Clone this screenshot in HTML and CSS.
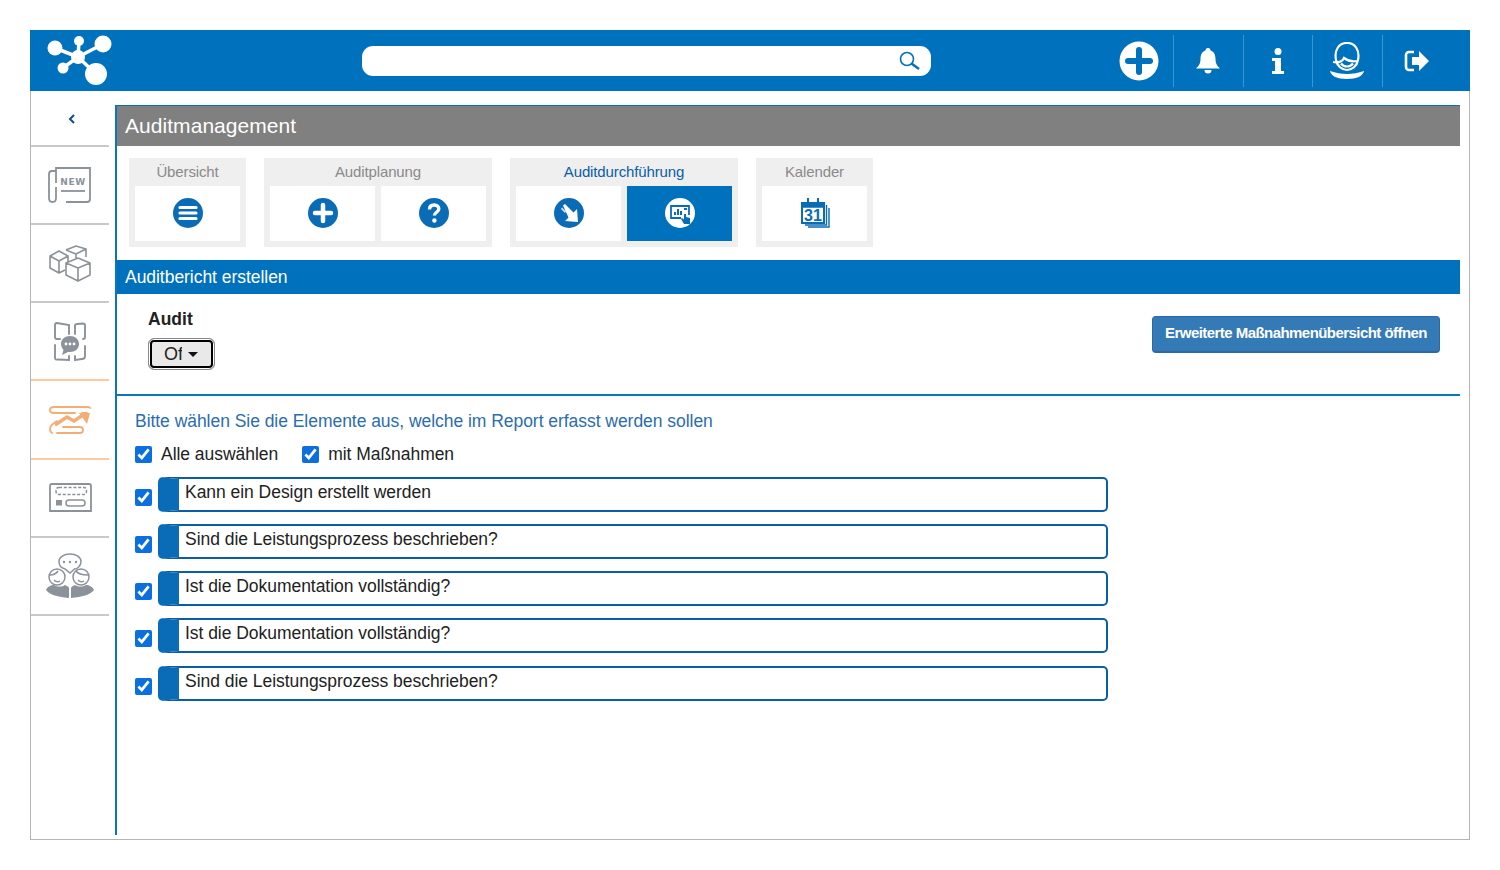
FILE: index.html
```html
<!DOCTYPE html>
<html lang="de">
<head>
<meta charset="utf-8">
<title>Auditmanagement</title>
<link rel="stylesheet" href="styles.css">
</head>
<body>
<div class="frame">
  <header class="topbar">
    <div class="logo">
      <svg width="66" height="52" viewBox="0 0 66 52"><path d="M31 22 8 13M31 22 32 6M31 22 56 9M31 22 16 33M31 22 49 39" stroke="#fff" stroke-width="3.500"/><g fill="#fff"><circle cx="31" cy="22" r="7"/><circle cx="8" cy="13" r="7.500"/><circle cx="32" cy="6" r="5"/><circle cx="56" cy="9" r="8.500"/><circle cx="16" cy="33" r="5.500"/><circle cx="49" cy="39" r="11"/></g></svg>
    </div>
    <div class="search">
      <svg width="24" height="20" viewBox="0 0 24 20" fill="none" stroke="#0071bc" stroke-width="1.600"><circle cx="9" cy="8" r="6.500"/><path d="M13.500 12.500 21 18" stroke-width="2.400"/></svg>
    </div>
    <nav class="topicons">
      <div class="topicon"><svg width="40" height="40" viewBox="0 0 40 40"><circle cx="20" cy="20" r="19.500" fill="#fff"/><path d="M20 9v22M9 20h22" stroke="#0071bc" stroke-width="6" stroke-linecap="round"/></svg></div>
      <div class="topicon"><svg width="26" height="28" viewBox="0 0 26 28" fill="#fff"><path d="M13 1c2 0 2.500 1.500 2.500 2.500C19 4.500 20.500 8 20.500 12c0 5 2 7 4.500 9.500H1C3.500 19 5.500 17 5.500 12 5.500 8 7 4.500 10.500 3.500 10.500 2.500 11 1 13 1Z"/><path d="M9.500 23h7a3.500 3.500 0 0 1-7 0Z"/></svg></div>
      <div class="topicon"><svg width="14" height="26" viewBox="0 0 14 26" fill="#fff"><circle cx="7" cy="3.500" r="3.500"/><path d="M1 10h9v13h3v3H1v-3h3V13H1Z"/></svg></div>
      <div class="topicon"><svg width="36" height="38" viewBox="0 0 36 38" fill="none" stroke="#fff" stroke-width="2.200"><path d="M7 18C5 8 10 1 18 1s13 7 11 17c-1 6-6 10-11 10S8 24 7 18Z"/><path d="M4 20c5 1 9 0 11-4 4 3 8 4 13 3"/><path d="M12 21.500c3 4 9 4 12 0"/><path d="M1 29c6 2 11 3 17 3s11-1 17-3c-1 5-7 8-17 8S2 34 1 29Z" fill="#fff" stroke="none"/></svg></div>
      <div class="topicon"><svg width="26" height="22" viewBox="0 0 26 22"><path d="M10 2H5a3 3 0 0 0-3 3v12a3 3 0 0 0 3 3h5" fill="none" stroke="#fff" stroke-width="2.600"/><path d="M8 7h7V1l10 10-10 10v-6H8Z" fill="#fff"/></svg></div>
    </nav>
  </header>
  <div class="body">
    <aside class="sidebar">
      <div class="back"><svg width="8" height="10" viewBox="0 0 8 10" fill="none" stroke="#0a4f8f" stroke-width="2"><path d="M6 1 2 5l4 4"/></svg></div>
      <div class="sideitem"><svg width="44" height="36" viewBox="0 0 44 36" fill="none" stroke="#8b929a" stroke-width="1.800"><path d="M8 16V1h34v31q0 3-3 3H18"/><path d="M8 4H4Q1 4 1 7v24q0 4 3.500 4T8 31V20"/><path d="M13 24h24" stroke-width="1.800"/><text x="25" y="18" class="newtext">NEW</text></svg></div>
      <div class="sideitem"><svg width="42" height="37" viewBox="0 0 42 37" fill="none" stroke="#8b929a" stroke-width="1.600" stroke-linejoin="round"><path d="M1 11 10 6l9 5-9 5ZM1 11v12l9 5 6-3M10 16v12M19 11v6"/><path d="M17 5 27 1l10 3v8M17 5l10 4 10-5M27 9v4"/><path d="M17 18l12-5 12 5-12 5ZM17 18v12l12 6 12-6V18M29 23v13"/></svg></div>
      <div class="sideitem"><svg width="32" height="39" viewBox="0 0 32 39" fill="none" stroke="#8b929a" stroke-width="1.900" stroke-linecap="round"><path d="M15 12V3L3 1Q1 1 1 3v12q0 2 2 2h3"/><path d="M21 12V4q0-2 2-2l6-.5q2 0 2 2V15q0 2-2 2"/><path d="M1 23v13q0 2 3 1.500L15 38v-4"/><path d="M31 24v10q0 3-3 3l-7 1v-4"/><path d="M16 14c5 0 9 3 9 8s-4 8-9 8h-2l-6 3 1.500-5C8 26 7 24 7 22c0-5 4-8 9-8Z" fill="#8b929a" stroke="none"/><g fill="#fff" stroke="none"><circle cx="12" cy="22" r="1.400"/><circle cx="16" cy="22" r="1.400"/><circle cx="20" cy="22" r="1.400"/></g></svg></div>
      <div class="sideitem active"><svg width="43" height="28" viewBox="0 0 43 28" fill="none" stroke="#f5ad76" stroke-width="1.900" stroke-linecap="round"><path d="M41 2Q41 1 39 1H5Q1 1 1 4t4 3h21M33 7h5"/><path d="M14 21h17q3 0 3 3t-3 3H8"/><path d="M8 15Q1 19 1 23q0 3 2 4"/><path d="M6 19l12-8 7 4 9-6" stroke-width="3.400" stroke-linecap="butt"/><path d="M30 7l11 0-3 11Z" fill="#f5ad76" stroke="none"/></svg></div>
      <div class="sideitem"><svg width="43" height="30" viewBox="0 0 43 30" fill="none" stroke="#8b929a" stroke-width="1.800"><path d="M1 28V3q0-2 2-2h37q2 0 2 2v25H1Z"/><path d="M10 4.500h25q2.500 0 2.500 3.500t-2.500 3.500H10Q7 11.500 7 8t3-3.500Z" stroke-dasharray="3 1.800" stroke-width="1.500"/><rect x="17" y="17" width="19" height="6" rx="3" stroke-width="1.500"/><rect x="7" y="17" width="6" height="5.500" fill="#8b929a" stroke="none"/></svg></div>
      <div class="sideitem"><svg width="48" height="46" viewBox="0 0 48 46" fill="none" stroke="#8b929a" stroke-width="1.500"><path d="M19 16c-4-1-6-4-6-7.500C13 4 18 1 24 1s11 3 11 7.500S31 16 28.500 16L24 20Z"/><circle cx="18" cy="9" r="1.200" fill="#8b929a" stroke="none"/><circle cx="24" cy="9" r="1.200" fill="#8b929a" stroke="none"/><circle cx="30" cy="9" r="1.200" fill="#8b929a" stroke="none"/><circle cx="11" cy="24" r="8"/><circle cx="35" cy="24" r="8"/><path d="M4 22c4 0 6-1 8-4M30 18c2 3 5 4 12 4M8 27q3 3 6 1M32 27q3 3 6 1"/><path d="M0 37c1-3 5-5 8-5 3 2 8 2 11 0 2 1 4 2 4 3v10C12 44 4 42 0 37ZM48 37c-1-3-5-5-8-5-3 2-8 2-11 0-2 1-4 2-4 3v10c11-1 19-3 23-8Z" fill="#8b929a" stroke="none"/></svg></div>
    </aside>
    <main class="main">
      <h1 class="title">Auditmanagement</h1>
      <div class="tabs">
        <section class="tabgroup">
          <div class="tabtitle">Übersicht</div>
          <div class="cells"><div class="cell"><svg class="ic" viewBox="0 0 30 30"><circle cx="15" cy="15" r="15" fill="#0a6cb6"/><path d="M7 9.500h16M7 15h16M7 20.500h16" stroke="#fff" stroke-width="3.200" stroke-linecap="round"/></svg></div></div>
        </section>
        <section class="tabgroup">
          <div class="tabtitle">Auditplanung</div>
          <div class="cells">
            <div class="cell"><svg class="ic" viewBox="0 0 30 30"><circle cx="15" cy="15" r="15" fill="#0a6cb6"/><path d="M15 7v16M7 15h16" stroke="#fff" stroke-width="4.500" stroke-linecap="round"/></svg></div>
            <div class="cell"><svg class="ic" viewBox="0 0 30 30"><circle cx="15" cy="15" r="15" fill="#0a6cb6"/><path d="M10.500 11.500c0-3 2-4.500 4.700-4.500 2.800 0 4.600 1.600 4.600 3.900 0 3.300-4.400 3.400-4.400 6.600" fill="none" stroke="#fff" stroke-width="3.400"/><circle cx="15.400" cy="22.500" r="2.200" fill="#fff"/></svg></div>
          </div>
        </section>
        <section class="tabgroup current">
          <div class="tabtitle">Auditdurchführung</div>
          <div class="cells">
            <div class="cell"><svg class="ic" viewBox="0 0 30 30"><circle cx="15" cy="15" r="15" fill="#0a6cb6"/><path d="M11 15 7 11l1-1.500 4 4Z" fill="#cfe3f2"/><path d="M9 7.500 11 6l8.500 8.500L23 11l1 13-13-1 3.500-3.500Z" fill="#fff"/></svg></div>
            <div class="cell selected"><svg class="ic" viewBox="0 0 30 30"><circle cx="15" cy="15" r="15" fill="#fff"/><path d="M16 20H6V8h18v9" fill="none" stroke="#0a6cb6" stroke-width="1.800"/><path d="M10 17v-3M13 17v-6M16 17v-4M19 11h3" stroke="#0a6cb6" stroke-width="2"/><path d="M19 26l-3-5 1-1 2 1.500V16h2v3l4 1v6Z" fill="#0a6cb6"/></svg></div>
          </div>
        </section>
        <section class="tabgroup">
          <div class="tabtitle">Kalender</div>
          <div class="cells"><div class="cell"><svg class="cal" viewBox="0 0 30 30" fill="none" stroke="#0a6cb6" stroke-width="2"><path d="M2 5h22v20H2Z"/><path d="M2 5h22v4H2Z" fill="#0a6cb6" stroke-width="1.500"/><path d="M8 0v6M18 0v6" stroke-width="2"/><path d="M26.500 7v20H5M29 10v19H8" stroke-width="1.400"/><text x="13" y="23" class="caltext">31</text></svg></div></div>
        </section>
      </div>
      <h2 class="sectionbar">Auditbericht erstellen</h2>
      <div class="filter">
        <div class="auditfield">
          <label class="auditlabel">Audit</label>
          <button class="dropdown"><span class="ddtext">Of</span><span class="caret"></span></button>
        </div>
        <button class="primary">Erweiterte Maßnahmenübersicht öffnen</button>
      </div>
      <div class="report">
        <p class="hint">Bitte wählen Sie die Elemente aus, welche im Report erfasst werden sollen</p>
        <div class="allrow">
          <label class="check"><input type="checkbox" checked>Alle auswählen</label>
          <label class="check"><input type="checkbox" checked>mit Maßnahmen</label>
        </div>
        <div class="item"><input type="checkbox" checked><div class="itembox">Kann ein Design erstellt werden</div></div>
        <div class="item"><input type="checkbox" checked><div class="itembox">Sind die Leistungsprozess beschrieben?</div></div>
        <div class="item"><input type="checkbox" checked><div class="itembox">Ist die Dokumentation vollständig?</div></div>
        <div class="item"><input type="checkbox" checked><div class="itembox">Ist die Dokumentation vollständig?</div></div>
        <div class="item"><input type="checkbox" checked><div class="itembox">Sind die Leistungsprozess beschrieben?</div></div>
      </div>
    </main>
  </div>
</div>
</body>
</html>
```
FILE: styles.css
```css
* { box-sizing: border-box; }
html, body { margin: 0; height: 100%; background: #fff; }
body { padding: 30px; font-family: "Liberation Sans", Arial, sans-serif; color: #222; overflow: hidden; }
.frame { width: 1440px; height: 810px; border: 1px solid #b5b5b5; border-top: 0; display: flex; flex-direction: column; }
.topbar { height: 61px; margin: 0 -1px; background: #0071bc; display: flex; align-items: center; flex: none; }
.logo { width: 332px; padding-left: 17px; display: flex; }
.search { width: 569px; height: 30px; background: #fff; border-radius: 11px; display: flex; align-items: center; justify-content: flex-end; padding-right: 9px; }
.topicons { margin-left: 173.500px; display: flex; }
.topicon { width: 69.500px; height: 52px; display: flex; align-items: center; justify-content: center; border-right: 1px solid #3d94cf; }
.topicon:last-child { border-right: 0; }
.body { flex: 1; display: flex; min-height: 0; }
.sidebar { width: 84px; flex: none; }
.back { width: 78px; height: 56px; border-bottom: 2px solid #c9c9c9; display: flex; align-items: center; justify-content: center; padding: 2px 0 0 3px; }
.sideitem { width: 78px; height: 78px; border-bottom: 2px solid #c9c9c9; display: flex; align-items: center; justify-content: center; }
.sideitem.active { margin-top: -2px; border-top: 2px solid #fbc9a2; border-bottom-color: #fbc9a2; height: 81px; }
.newtext { font: 700 9px "DejaVu Sans", sans-serif; letter-spacing: .6px; fill: #8b929a; stroke: none; text-anchor: middle; }
.main { width: 1345px; margin-top: 14px; height: 730px; border-left: 2px solid #0a75bb; display: flex; flex-direction: column; flex: none; }
.title { margin: 0; height: 41px; background: #808080; color: #fff; font-weight: 400; font-size: 21px; line-height: 39px; padding-left: 8px; letter-spacing: .05px; border-top: 1px solid #0a6cb6; flex: none; }
.tabs { display: flex; gap: 18px; padding: 12px 0 0 12px; height: 114px; flex: none; }
.tabgroup { background: #efefef; height: 89px; padding: 0 6px 6px; }
.tabtitle { height: 28px; text-align: center; color: #8a8a8a; font-size: 15px; line-height: 27px; letter-spacing: -.13px; }
.current .tabtitle { color: #0a5ea8; }
.cells { display: flex; gap: 6px; }
.cell { width: 105px; height: 55px; background: #fff; display: flex; align-items: center; justify-content: center; padding-bottom: 1px; }
.cell.selected { background: #0071bc; }
.ic { width: 30px; height: 30px; }
.cal { width: 30px; height: 30px; }
.caltext { font: 700 16px "Liberation Sans", sans-serif; fill: #0a6cb6; stroke: none; text-anchor: middle; }
.sectionbar { margin: 0; height: 34px; background: #0071bc; color: #fff; font-weight: 400; font-size: 17.500px; line-height: 34px; padding-left: 8px; letter-spacing: -.04px; flex: none; }
.filter { height: 102px; border-bottom: 2px solid #0a75bb; display: flex; justify-content: space-between; padding: 15px 20px 0 31px; flex: none; }
.auditfield { display: flex; flex-direction: column; align-items: flex-start; }
.auditlabel { font-weight: 700; font-size: 17.500px; line-height: 20px; color: #222; }
.dropdown { margin-top: 9px; width: 67px; height: 32px; border: 1px solid #888; border-radius: 6px; box-shadow: inset 0 0 0 1px #fff, inset 0 0 0 3px #000; background: #e9e9e9; padding: 0 0 0 15px; display: flex; align-items: center; font: 18px "Liberation Sans", sans-serif; color: #222; }
.ddtext { width: 18px; margin-right: 1px; overflow: hidden; white-space: nowrap; text-align: left; }
.caret { margin-left: 5px; border-top: 5px solid #111; border-left: 5px solid transparent; border-right: 5px solid transparent; }
.primary { margin-top: 7px; width: 288px; height: 37px; background: #337ab7; border: 1px solid #2a6aa5; border-bottom-width: 2px; border-radius: 4px; color: #fff; font: 700 15px "Liberation Sans", sans-serif; letter-spacing: -.55px; padding: 0 0 3px; white-space: nowrap; }
.report { padding: 15px 0 0 18px; }
.hint { margin: 0; color: #2a6db0; font-size: 17.500px; line-height: 20px; letter-spacing: -.04px; }
.allrow { display: flex; gap: 24px; margin-top: 13px; height: 20px; align-items: center; }
.check { display: flex; align-items: center; gap: 9px; font-size: 17.500px; letter-spacing: -.04px; color: #222; }
input[type="checkbox"] { width: 17px; height: 17px; margin: 0; accent-color: #0b6fe0; flex: none; }
.item { display: flex; align-items: center; gap: 6px; height: 34px; margin-top: 13.300px; }
.allrow + .item { margin-top: 13px; }
.item input { margin-top: 6px; }
.itembox { width: 950px; height: 35px; border: 2px solid #0a5ea8; border-left: 21px solid #0a6cb6; border-radius: 5px; background: #fff; padding: 0 0 0 6px; font-size: 17.500px; line-height: 26px; letter-spacing: -.04px; color: #222; }
```
